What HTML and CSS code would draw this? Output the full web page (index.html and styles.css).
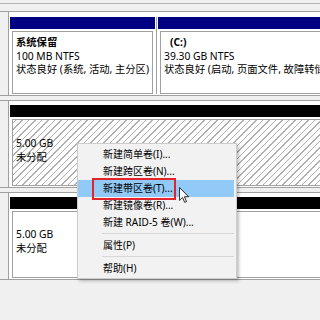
FILE: index.html
```html
<!DOCTYPE html>
<html lang="zh-CN">
<head>
    <meta charset="UTF-8">
    <title>磁盘管理</title>
    <link rel="stylesheet" href="styles.css">
</head>
<body>
    <!-- bottom of previous disk -->
    <div class="edge"></div>

    <!-- Disk 0 -->
    <div class="disk first">
        <div class="disk-label"></div>
        <div class="parts">
            <div class="part primary reserved">
                <div class="bar"></div>
                <div class="box">
                    <div class="name">系统保留</div>
                    <div>100 MB NTFS</div>
                    <div>状态良好 (系统, 活动, 主分区)</div>
                </div>
            </div>
            <div class="part primary grow">
                <div class="bar"></div>
                <div class="box">
                    <div class="name indent">(C:)</div>
                    <div>39.30 GB NTFS</div>
                    <div>状态良好 (启动, 页面文件, 故障转储, 主分区)</div>
                </div>
            </div>
        </div>
    </div>

    <!-- Disk 1 -->
    <div class="disk second">
        <div class="disk-label"></div>
        <div class="parts">
            <div class="part free grow">
                <div class="bar"></div>
                <div class="box hatched">
                    <div>5.00 GB</div>
                    <div>未分配</div>
                </div>
            </div>
        </div>
    </div>

    <!-- Disk 2 -->
    <div class="disk third">
        <div class="disk-label"></div>
        <div class="parts">
            <div class="part free grow">
                <div class="bar"></div>
                <div class="box">
                    <div>5.00 GB</div>
                    <div>未分配</div>
                </div>
            </div>
        </div>
    </div>

    <!-- Context menu -->
    <ul class="menu">
        <li>新建简单卷(I)...</li>
        <li>新建跨区卷(N)...</li>
        <li class="active">新建带区卷(T)...</li>
        <li>新建镜像卷(R)...</li>
        <li>新建 RAID-5 卷(W)...</li>
        <li class="sep"></li>
        <li>属性(P)</li>
        <li class="sep"></li>
        <li>帮助(H)</li>
        <div class="mark"></div>
    </ul>

    <svg class="cursor" width="10" height="16" viewBox="0 0 12 19">
        <path d="M0.5 0.5 L0.5 16 L4.2 12.4 L6.8 18.3 L9 17.3 L6.5 11.6 L11.5 11.6 Z" fill="#fff" stroke="#000" stroke-width="1" stroke-linejoin="round"/>
    </svg>
</body>
</html>
```

FILE: styles.css
```css
/* Base */
* {
    margin: 0;
    padding: 0;
    box-sizing: border-box;
}

body {
    width: 320px;
    height: 320px;
    overflow: hidden;
    position: relative;
    background-color: #f0f0f0;
    color: #000;
    font-family: "Noto Sans", "Noto Sans CJK SC", sans-serif;
    font-size: 10.3px;
    line-height: 13.5px;
}

.edge {
    height: 4px;
    border-bottom: 1px solid #b4b4b4;
    background-color: #f0f0f0;
}

/* Disk rows - they run on past the right edge of the view */
.disk {
    display: flex;
    width: 350px;
    background-color: #fff;
    border-top: 1px solid #a0a0a0;
    border-bottom: 1px solid #a0a0a0;
    margin-top: 4px;
}

.disk.first {
    margin-top: 7px;
}

.disk-label {
    width: 9px;
    flex: none;
    background-color: #f0f0f0;
    border-right: 1px solid #a0a0a0;
}

.parts {
    display: flex;
    flex: 1;
    min-width: 0;
    padding: 4px 0 1px 1px;
}

.first .parts {
    padding-top: 5px;
}

.part {
    display: flex;
    flex-direction: column;
    min-width: 0;
}

.part.reserved {
    width: 145px;
    flex: none;
}

.part.grow {
    flex: 1;
}

.part + .part {
    margin-left: 1px;
    padding-left: 1px;
    border-left: 1px solid #a0a0a0;
}

.bar {
    height: 12px;
}

.primary .bar {
    background-color: #000082;
}

.free .bar {
    background-color: #000;
}

.box {
    margin: 2px 2px 0;
    border: 1px solid #a0a0a0;
    padding: 4px 3px 0;
    white-space: nowrap;
    overflow: hidden;
    height: 63px;
}

.second .box {
    height: 67px;
    padding-top: 17px;
}

.third .box {
    height: 67px;
    padding-top: 16px;
}

.hatched {
    background: repeating-linear-gradient(-45deg, #fff 0, #fff 3.6px, #b0b0b0 3.6px, #b0b0b0 4.6px);
}

.name {
    font-weight: bold;
}

.indent {
    padding-left: 6px;
}

/* Context menu */
.menu {
    position: absolute;
    left: 77px;
    top: 143px;
    width: 160px;
    padding: 2px 0 1px;
    list-style: none;
    background-color: #f2f2f2;
    border: 1px solid #cccccc;
    box-shadow: 2px 2px 3px rgba(0, 0, 0, 0.25);
    font-size: 10px;
}

.menu li {
    height: 17px;
    line-height: 17px;
    padding-left: 25px;
    margin-right: 2px;
    white-space: nowrap;
}

.menu li.active {
    background-color: #91c9f7;
}

.menu li.sep {
    height: 6px;
    padding: 0;
    margin: 0 2px 0 24px;
    position: relative;
}

.menu li.sep::after {
    content: '';
    position: absolute;
    left: 0;
    right: 0;
    top: 2px;
    height: 1px;
    background-color: #d7d7d7;
}

.mark {
    position: absolute;
    left: 14px;
    top: 34px;
    width: 84px;
    height: 22px;
    border: 2px solid #e3242b;
}

.cursor {
    position: absolute;
    left: 179px;
    top: 187px;
}
```
